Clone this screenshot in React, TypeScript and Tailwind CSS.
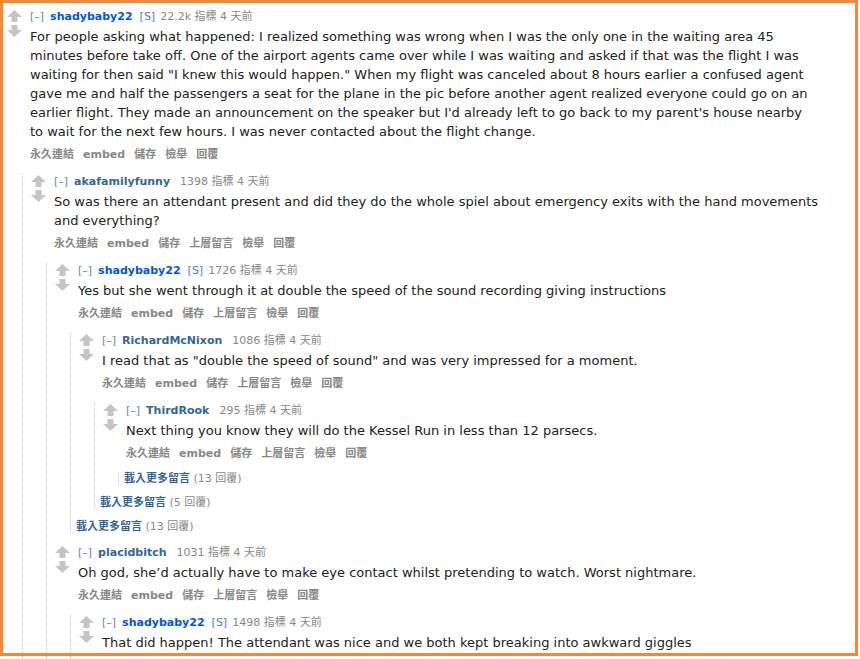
import React from "react";

type Node =
  | { kind: "comment"; user: string; op?: boolean; score: string; body: string[]; top?: boolean; children?: Node[] }
  | { kind: "more"; count: number };

const FONT = { fontFamily: '"DejaVu Sans", Verdana, "Noto Sans CJK TC", sans-serif' };

function Arrow({ down }: { down?: boolean }) {
  return (
    <svg width="15" height="12" viewBox="0 0 15 12" className="block">
      {down ? (
        <path d="M4.5 0 H10.5 V5 H15 L7.5 12 L0 5 H4.5 Z" fill="#c4c4c4" />
      ) : (
        <path d="M7.5 0 L15 7 H10.5 V12 H4.5 V7 H0 Z" fill="#c4c4c4" />
      )}
    </svg>
  );
}

function Buttons({ top }: { top?: boolean }) {
  const items = top
    ? ["永久連結", "embed", "儲存", "檢舉", "回覆"]
    : ["永久連結", "embed", "儲存", "上層留言", "檢舉", "回覆"];
  return (
    <div className="flex gap-[9px] h-[14px] leading-[14px] text-[11px] font-bold text-[#888] mt-[7px] whitespace-nowrap">
      {items.map((t) => (
        <span key={t}>{t}</span>
      ))}
    </div>
  );
}

function Children({ nodes }: { nodes: Node[] }) {
  return (
    <div className="ml-[18px] mt-[12px] border-l border-dotted border-[#c8c8dc] pl-[5px] flex flex-col gap-[12px]">
      {nodes.map((n, i) => (
        <Item key={i} node={n} />
      ))}
    </div>
  );
}

function Item({ node }: { node: Node }) {
  if (node.kind === "more") {
    return (
      <div className="h-[12px] leading-[12px] text-[11px] whitespace-nowrap">
        <span className="font-bold text-[#336699]">載入更多留言</span>
        <span className="text-[#888]"> ({node.count} 回覆)</span>
      </div>
    );
  }
  return (
    <div className="flex flex-col">
      <div className="flex">
        <div className="w-[26px] shrink-0 flex flex-col pl-[3px] pt-[1px] gap-[3px]">
          <Arrow />
          <Arrow down />
        </div>
        <div className="flex flex-col">
          <div className="h-[14px] leading-[14px] text-[11px] whitespace-nowrap text-[#888] flex items-baseline pt-[1px]">
            <span className="text-[#6a86b4]">[–]</span>
            <span className={"ml-[6px] font-bold " + (node.op ? "text-[#0055df]" : "text-[#336699]")}>{node.user}</span>
            {node.op ? <span className="text-[#4d7bd6] ml-[7px]">[S]</span> : null}
            <span className={node.op ? "ml-[5px]" : "ml-[10px]"}>{node.score} 指標 4 天前</span>
          </div>
          <div className="mt-[4px] text-[13px] leading-[19px] text-[#222] whitespace-nowrap">
            {node.body.map((l, i) => (
              <div key={i}>{l}</div>
            ))}
          </div>
          <Buttons top={node.top} />
        </div>
      </div>
      {node.children && node.children.length > 0 && <Children nodes={node.children} />}
    </div>
  );
}

const tree: Node = {
  kind: "comment",
  user: "shadybaby22",
  op: true,
  top: true,
  score: "22.2k",
  body: [
    "For people asking what happened: I realized something was wrong when I was the only one in the waiting area 45",
    "minutes before take off. One of the airport agents came over while I was waiting and asked if that was the flight I was",
    "waiting for then said \"I knew this would happen.\" When my flight was canceled about 8 hours earlier a confused agent",
    "gave me and half the passengers a seat for the plane in the pic before another agent realized everyone could go on an",
    "earlier flight. They made an announcement on the speaker but I'd already left to go back to my parent's house nearby",
    "to wait for the next few hours. I was never contacted about the flight change.",
  ],
  children: [
    {
      kind: "comment",
      user: "akafamilyfunny",
      score: "1398",
      body: [
        "So was there an attendant present and did they do the whole spiel about emergency exits with the hand movements",
        "and everything?",
      ],
      children: [
        {
          kind: "comment",
          user: "shadybaby22",
          op: true,
          score: "1726",
          body: ["Yes but she went through it at double the speed of the sound recording giving instructions"],
          children: [
            {
              kind: "comment",
              user: "RichardMcNixon",
              score: "1086",
              body: ["I read that as \"double the speed of sound\" and was very impressed for a moment."],
              children: [
                {
                  kind: "comment",
                  user: "ThirdRook",
                  score: "295",
                  body: ["Next thing you know they will do the Kessel Run in less than 12 parsecs."],
                  children: [{ kind: "more", count: 13 }],
                },
                { kind: "more", count: 5 },
              ],
            },
            { kind: "more", count: 13 },
          ],
        },
        {
          kind: "comment",
          user: "placidbitch",
          score: "1031",
          body: ["Oh god, she\u2019d actually have to make eye contact whilst pretending to watch. Worst nightmare."],
          children: [
            {
              kind: "comment",
              user: "shadybaby22",
              op: true,
              score: "1498",
              body: ["That did happen! The attendant was nice and we both kept breaking into awkward giggles"],
            },
          ],
        },
      ],
    },
  ],
};

export default function App() {
  return (
    <div className="relative w-[860px] h-[659px] overflow-hidden bg-white" style={FONT}>
      <div className="pl-[4px] pt-[9px]">
        <Item node={tree} />
      </div>
      <div className="absolute left-0 top-0 w-[858px] h-[656px] border-[3px] border-[#f5873b] pointer-events-none" />
    </div>
  );
}
